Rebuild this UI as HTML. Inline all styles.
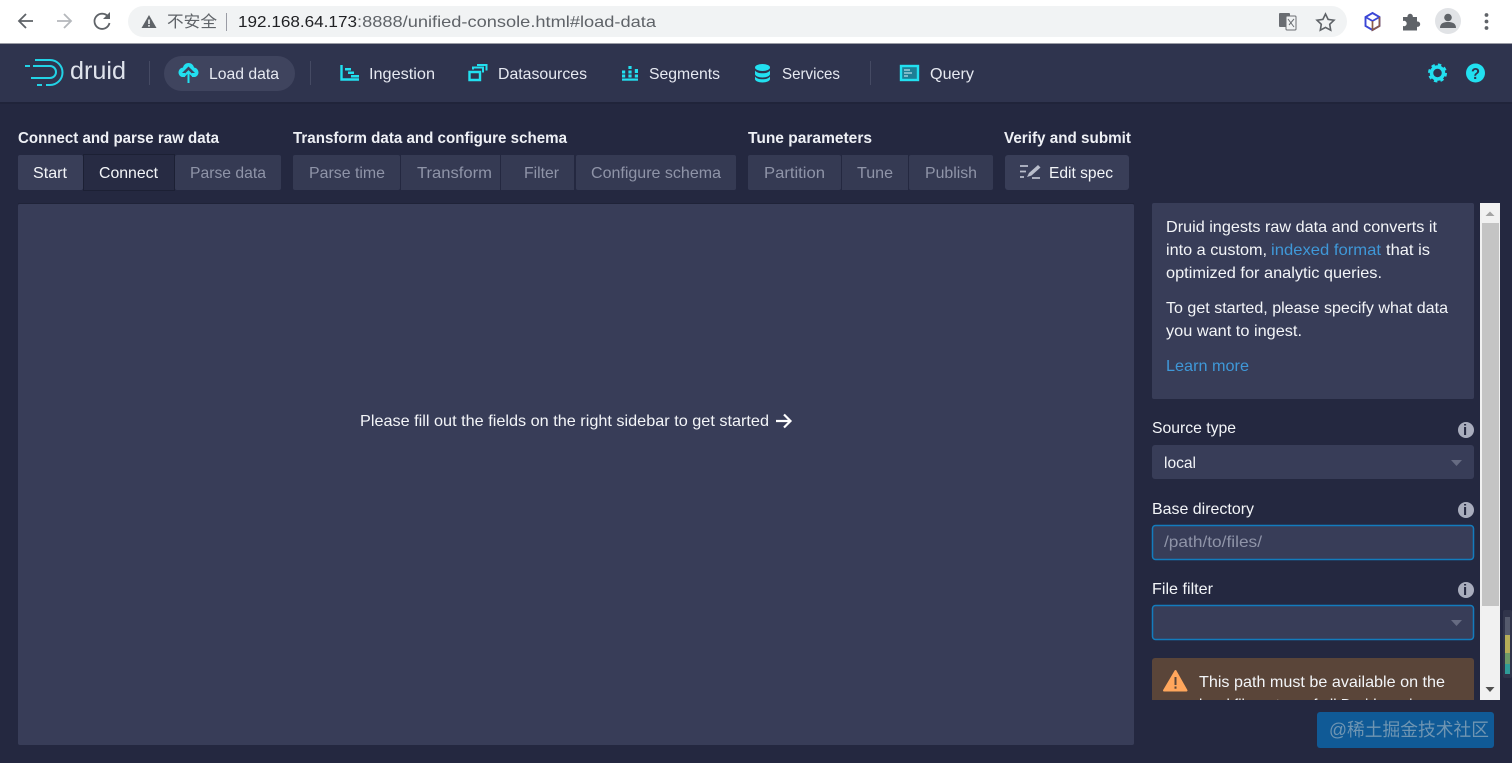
<!DOCTYPE html>
<html lang="en"><head><meta charset="utf-8"><title>Druid Console</title>
<style>
html,body{margin:0;padding:0;width:1512px;height:763px;overflow:hidden;background:#242840}
svg{display:block;position:absolute;left:0;top:0;filter:blur(.3px)}
text{font-family:"Liberation Sans","Noto Sans CJK SC",sans-serif;font-size:16px;fill:#f3f5f8}
.n{fill:#e6e9f1}
.m{fill:#8f94a8}
.h{font-weight:bold;fill:#eef0f5}
.l{fill:#3f98d8}
.c{fill:none;stroke:#22e0f0;stroke-width:2.400}
.f{fill:#22e0f0}
</style></head><body>
<svg width="1512" height="763" viewBox="0 0 1512 763" xmlns="http://www.w3.org/2000/svg">
<!-- browser bar -->
<rect width="1512" height="43" fill="#fff"/>
<rect y="43" width="1512" height="1" fill="#9a9ca5"/>
<g fill="none" stroke="#5f6368" stroke-width="1.800">
<path d="M33 21H19M26 14l-7 7 7 7"/>
<path d="M57 21H71M64 14l7 7-7 7" stroke="#b5b8bc"/>
<path d="M108 16.500A7.600 7.600 0 1 0 109.500 23"/>
</g>
<path d="M110 12v7h-7z" fill="#5f6368"/>
<rect x="128" y="6" width="1219" height="31" rx="15.500" fill="#f1f3f4"/>
<path d="M149 15l7.500 13h-15z" fill="#5f6368"/>
<rect x="148.200" y="19.500" width="1.600" height="4.500" fill="#f1f3f4"/><rect x="148.200" y="25" width="1.600" height="1.600" fill="#f1f3f4"/>
<text x="167" y="27" textLength="50" lengthAdjust="spacingAndGlyphs" style="fill:#5f6368">不安全</text>
<rect x="226" y="13" width="1" height="18" fill="#9a9ca5"/>
<text x="238" y="27" textLength="119" lengthAdjust="spacingAndGlyphs" style="fill:#202124">192.168.64.173</text>
<text x="357" y="27" textLength="299" lengthAdjust="spacingAndGlyphs" style="fill:#5f6368">:8888/unified-console.html#load-data</text>
<!-- translate, star, ext, puzzle, avatar, dots -->
<rect x="1279" y="13" width="11" height="14" rx="1" fill="#6a6d72"/>
<rect x="1286" y="16" width="10" height="14" rx="1" fill="#f1f3f4" stroke="#6a6d72"/>
<path d="M1288 19l6 8M1294 19l-5 6" stroke="#6a6d72" fill="none"/>
<path d="M1325.500 14l2.600 5.400 5.900.8-4.300 4.100 1 5.900-5.200-2.800-5.200 2.800 1-5.900-4.300-4.100 5.900-.8z" fill="none" stroke="#5f6368" stroke-width="1.600"/>
<path d="M1372.500 13l7 4v9l-7 4-7-4v-9z" fill="none" stroke="#3b46d6" stroke-width="1.900"/>
<path d="M1365.500 17l7 4 7-4" fill="none" stroke="#3b46d6" stroke-width="1.700"/>
<path d="M1372.500 21v9l7-4v-9" fill="none" stroke="#8a5a4a" stroke-width="1.700"/>
<path d="M1403 17h4.500a2.700 2.700 0 1 1 5.300 0h4.200v4.500a2.700 2.700 0 1 1 0 5.300v3.700h-14v-4.500a2.700 2.700 0 1 0 0-5z" fill="#5f6368"/>
<circle cx="1448" cy="21" r="13" fill="#e1e3e6"/>
<circle cx="1448" cy="17.500" r="3.800" fill="#5f6368"/>
<path d="M1440 28c0-5 4-6 8-6s8 1 8 6z" fill="#5f6368"/>
<g fill="#5f6368"><circle cx="1486.500" cy="15" r="1.900"/><circle cx="1486.500" cy="21.500" r="1.900"/><circle cx="1486.500" cy="28" r="1.900"/></g>

<!-- nav -->
<rect y="44" width="1512" height="58" fill="#2f344e"/>
<rect y="102" width="1512" height="2" fill="#20243a"/>
<g fill="none" stroke="#22d3e6" stroke-width="2">
<path d="M35 60H50A12.500 12.500 0 0 1 50 85H46"/>
<path d="M33 66H50A6 6 0 0 1 50 78H31"/>
<path d="M25 66H30M37 85H42"/>
</g>
<text x="70" y="79" textLength="56" lengthAdjust="spacingAndGlyphs" style="font-size:25px;fill:#dfe3ec">druid</text>
<rect x="149" y="61" width="1" height="24" fill="#454a63"/>
<rect x="164" y="56" width="131" height="35" rx="17.500" fill="#3f445e"/>
<path d="M188.500 63c3 0 5 2 5.500 4.500 2.500.3 4.500 2.500 4.500 5 0 2-1.500 4-3.500 4.500h-3v-4l3 0-6.500-6.500-6.500 6.500 3 0v4h-3c-2-.5-3.500-2.500-3.500-4.500 0-2.500 2-4.700 4.500-5C183.500 65 185.500 63 188.500 63z" class="f"/>
<path d="M188.500 83v-11M184 76l4.500-4.500 4.500 4.500" fill="none" stroke="#22e0f0" stroke-width="2"/>
<text x="209" y="79" textLength="70" lengthAdjust="spacingAndGlyphs" class="n">Load data</text>
<rect x="310" y="61" width="1" height="24" fill="#454a63"/>
<path class="c" d="M341.500 65v14.500h17.500"/>
<g class="f"><rect x="345" y="68" width="6" height="2.500"/><rect x="348" y="71.500" width="6" height="2.500"/><rect x="351" y="75" width="8" height="2.500"/></g>
<text x="369" y="79" textLength="66" lengthAdjust="spacingAndGlyphs" class="n">Ingestion</text>
<path class="c" d="M469.500 72h10.500v8h-10.500z"/>
<path d="M473 69.500v-2h10v5M477 65h9.500v5.500" fill="none" stroke="#22e0f0" stroke-width="2"/>
<text x="498" y="79" textLength="89" lengthAdjust="spacingAndGlyphs" class="n">Datasources</text>
<g class="f"><rect x="622" y="78.500" width="16" height="2.200"/><rect x="622" y="70.500" width="3.200" height="3"/><rect x="622" y="74.500" width="3.200" height="3"/><rect x="628.400" y="66" width="3.200" height="3"/><rect x="628.400" y="70.500" width="3.200" height="3"/><rect x="628.400" y="74.500" width="3.200" height="3"/><rect x="634.800" y="69" width="3.200" height="4"/><rect x="634.800" y="74.500" width="3.200" height="3"/></g>
<text x="649" y="79" textLength="71" lengthAdjust="spacingAndGlyphs" class="n">Segments</text>
<g class="f"><ellipse cx="762.500" cy="67.500" rx="7.500" ry="3.500"/><path d="M755 70.500c1.500 2 4 2.800 7.500 2.800s6-.8 7.500-2.800v3.500c0 2-3.500 3.500-7.500 3.500s-7.500-1.500-7.500-3.500z"/><path d="M755 76.500c1.500 2 4 2.800 7.500 2.800s6-.8 7.500-2.800v2.500c0 2-3.500 3.500-7.500 3.500s-7.500-1.500-7.500-3.500z"/></g>
<text x="782" y="79" textLength="58" lengthAdjust="spacingAndGlyphs" class="n">Services</text>
<rect x="870" y="61" width="1" height="24" fill="#454a63"/>
<rect x="901" y="66" width="17" height="14" fill="#1e7f95" stroke="#22e0f0" stroke-width="2.400"/>
<path d="M904 70h6M904 73h8M904 76h4" stroke="#d9f6fa" stroke-width="1"/>
<text x="930" y="79" textLength="44" lengthAdjust="spacingAndGlyphs" class="n">Query</text>
<circle cx="1437.500" cy="73" r="6" fill="none" stroke="#22e0f0" stroke-width="3.500"/>
<circle cx="1437.500" cy="73" r="8" fill="none" stroke="#22e0f0" stroke-width="3" stroke-dasharray="3.300 3"/>
<circle cx="1475.500" cy="73" r="9.500" class="f"/>
<text x="1471" y="79" textLength="9" lengthAdjust="spacingAndGlyphs" style="font-size:16px;font-weight:bold;fill:#2f344e">?</text>

<!-- step headers -->
<text class="h" x="18" y="143" textLength="201" lengthAdjust="spacingAndGlyphs">Connect and parse raw data</text>
<text class="h" x="293" y="143" textLength="274" lengthAdjust="spacingAndGlyphs">Transform data and configure schema</text>
<text class="h" x="748" y="143" textLength="124" lengthAdjust="spacingAndGlyphs">Tune parameters</text>
<text class="h" x="1004" y="143" textLength="127" lengthAdjust="spacingAndGlyphs">Verify and submit</text>

<!-- step buttons -->
<rect x="18" y="155" width="65" height="35" rx="2" fill="#393e58"/>
<rect x="83.500" y="154.500" width="91" height="36" fill="#272b43" stroke="#1c2034"/>
<rect x="175" y="155" width="106" height="35" rx="2" fill="#353a53"/>
<rect x="293" y="155" width="107" height="35" rx="2" fill="#353a53"/>
<rect x="401" y="155" width="99" height="35" fill="#353a53"/>
<rect x="501" y="155" width="73" height="35" fill="#353a53"/>
<rect x="576" y="155" width="160" height="35" rx="2" fill="#353a53"/>
<rect x="748" y="155" width="93" height="35" rx="2" fill="#353a53"/>
<rect x="842" y="155" width="66" height="35" fill="#353a53"/>
<rect x="909" y="155" width="84" height="35" rx="2" fill="#353a53"/>
<rect x="1005" y="155" width="124" height="35" rx="3" fill="#393e58"/>
<text x="33" y="178" textLength="34" lengthAdjust="spacingAndGlyphs">Start</text>
<text x="99" y="178" textLength="59" lengthAdjust="spacingAndGlyphs">Connect</text>
<text class="m" x="190" y="178" textLength="76" lengthAdjust="spacingAndGlyphs">Parse data</text>
<text class="m" x="309" y="178" textLength="76" lengthAdjust="spacingAndGlyphs">Parse time</text>
<text class="m" x="417" y="178" textLength="75" lengthAdjust="spacingAndGlyphs">Transform</text>
<text class="m" x="524" y="178" textLength="35" lengthAdjust="spacingAndGlyphs">Filter</text>
<text class="m" x="591" y="178" textLength="130" lengthAdjust="spacingAndGlyphs">Configure schema</text>
<text class="m" x="764" y="178" textLength="61" lengthAdjust="spacingAndGlyphs">Partition</text>
<text class="m" x="857" y="178" textLength="36" lengthAdjust="spacingAndGlyphs">Tune</text>
<text class="m" x="925" y="178" textLength="52" lengthAdjust="spacingAndGlyphs">Publish</text>
<path d="M1020 166h8M1020 171.500h6M1020 177h4M1032 178h8" stroke="#b9bdcb" stroke-width="1.800" fill="none"/>
<path d="M1027 177l2-4 9-8 2.500 2.500-9 8z" fill="#b9bdcb"/>
<text x="1049" y="178" textLength="64" lengthAdjust="spacingAndGlyphs">Edit spec</text>

<!-- main -->
<rect x="18" y="204" width="1116" height="541" rx="2" fill="#383d58"/>
<rect x="18" y="203" width="1116" height="1" fill="#1f2338"/>
<text x="360" y="426" textLength="409" lengthAdjust="spacingAndGlyphs">Please fill out the fields on the right sidebar to get started</text>
<path d="M776 421h14M784 414.500l6.500 6.500-6.500 6.500" fill="none" stroke="#fff" stroke-width="2.200"/>

<!-- sidebar -->
<rect x="1152" y="203" width="322" height="196" rx="2" fill="#383d58"/>
<text x="1166" y="232" textLength="271" lengthAdjust="spacingAndGlyphs">Druid ingests raw data and converts it</text>
<text x="1166" y="255" textLength="101" lengthAdjust="spacingAndGlyphs">into a custom,</text>
<text class="l" x="1271" y="255" textLength="110" lengthAdjust="spacingAndGlyphs">indexed format</text>
<text x="1386" y="255" textLength="44" lengthAdjust="spacingAndGlyphs">that is</text>
<text x="1166" y="278" textLength="216" lengthAdjust="spacingAndGlyphs">optimized for analytic queries.</text>
<text x="1166" y="313" textLength="282" lengthAdjust="spacingAndGlyphs">To get started, please specify what data</text>
<text x="1166" y="336" textLength="136" lengthAdjust="spacingAndGlyphs">you want to ingest.</text>
<text class="l" x="1166" y="371" textLength="83" lengthAdjust="spacingAndGlyphs">Learn more</text>

<text x="1152" y="433" textLength="84" lengthAdjust="spacingAndGlyphs">Source type</text>
<circle cx="1466" cy="430" r="8" fill="#a9adbd"/>
<rect x="1152" y="445" width="322" height="34" rx="3" fill="#383d58"/>
<text x="1164" y="468" textLength="32" lengthAdjust="spacingAndGlyphs">local</text>
<path d="M1451 460h11l-5.500 6z" fill="#666b82"/>

<text x="1152" y="514" textLength="102" lengthAdjust="spacingAndGlyphs">Base directory</text>
<circle cx="1466" cy="510" r="8" fill="#a9adbd"/>
<rect x="1152.500" y="525.500" width="321" height="34" rx="3" fill="#383d58" stroke="#137cbd" stroke-width="1.500"/>
<text class="m" x="1164" y="547" textLength="98" lengthAdjust="spacingAndGlyphs">/path/to/files/</text>

<text x="1152" y="594" textLength="61" lengthAdjust="spacingAndGlyphs">File filter</text>
<circle cx="1466" cy="590" r="8" fill="#a9adbd"/>
<rect x="1152.500" y="605.500" width="321" height="34" rx="3" fill="#383d58" stroke="#137cbd" stroke-width="1.500"/>
<path d="M1451 620h11l-5.500 6z" fill="#666b82"/>
<text x="1463" y="435" style="font-size:15px;font-weight:bold;fill:#242840">i</text>
<text x="1463" y="515" style="font-size:15px;font-weight:bold;fill:#242840">i</text>
<text x="1463" y="595" style="font-size:15px;font-weight:bold;fill:#242840">i</text>

<clipPath id="w"><rect x="1152" y="650" width="322" height="50"/></clipPath>
<g clip-path="url(#w)">
<rect x="1152" y="658" width="322" height="80" rx="3" fill="#5a4539"/>
<path d="M1175.500 671l11 19.500h-22.500z" fill="#ffa65c" stroke="#ffa65c" stroke-linejoin="round" stroke-width="2"/>
<rect x="1174.500" y="677" width="2" height="8" fill="#5a4539"/><rect x="1174.500" y="686.500" width="2" height="2.200" fill="#5a4539"/>
<text x="1199" y="687" textLength="246" lengthAdjust="spacingAndGlyphs">This path must be available on the</text>
<text x="1199" y="710" textLength="241" lengthAdjust="spacingAndGlyphs">local filesystem of all Druid services.</text>
</g>

<!-- scrollbar -->
<rect x="1480" y="203" width="20" height="497" fill="#f1f1f1"/>
<rect x="1482" y="223" width="17" height="383" fill="#c4c4c4"/>
<path d="M1485.500 216l4.500-4.500 4.500 4.500z" fill="#a3a3a3"/>
<path d="M1485.500 687l4.500 5 4.500-5z" fill="#505050"/>

<!-- side meter -->
<rect x="1503" y="610" width="9" height="68" rx="2" fill="#30344a"/>
<rect x="1505" y="617" width="5" height="18" fill="#555a6c"/>
<rect x="1505" y="635" width="5" height="18" fill="#b6ad58"/>
<rect x="1505" y="653" width="5" height="11" fill="#6d9a68"/>
<rect x="1505" y="664" width="5" height="10" fill="#2f9c98"/>

<!-- watermark -->
<rect x="1317" y="712" width="177" height="36" rx="3" fill="#105a96"/>
<text x="1329" y="736" textLength="160" lengthAdjust="spacingAndGlyphs" style="font-size:18px;fill:#6f95b2">@稀土掘金技术社区</text>
</svg>
</body></html>
